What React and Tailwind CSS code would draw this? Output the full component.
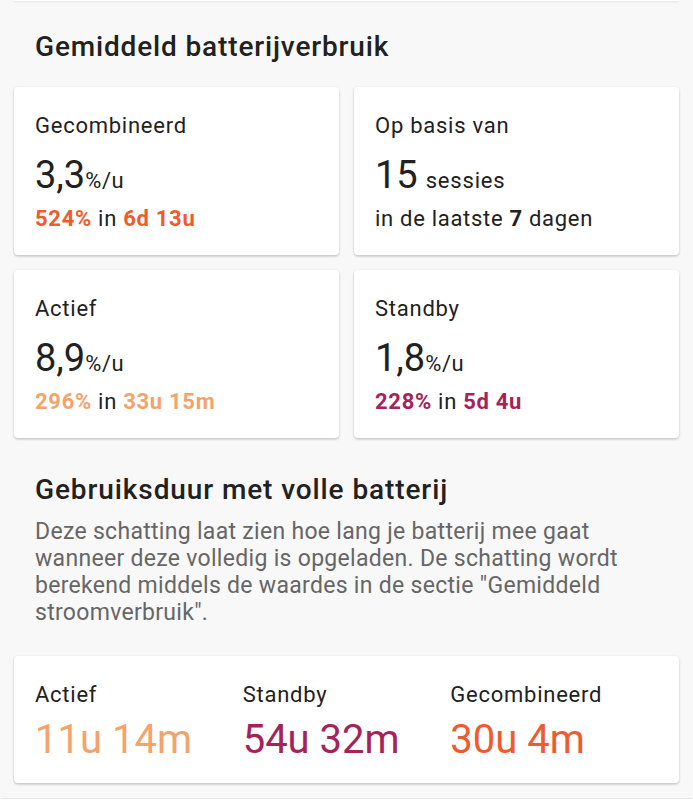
import React from 'react';

const font = { fontFamily: 'Roboto, "Noto Sans", sans-serif' };

const usageCards = [
  { label: 'Actief', rate: '8,9', pct: '296%', time: '33u 15m', color: 'text-[#f4a36b]' },
  { label: 'Standby', rate: '1,8', pct: '228%', time: '5d 4u', color: 'text-[#a5235a]' },
];

const estimates = [
  { label: 'Actief', value: '11u 14m', color: 'text-[#f4a36b]' },
  { label: 'Standby', value: '54u 32m', color: 'text-[#a5235a]' },
  { label: 'Gecombineerd', value: '30u 4m', color: 'text-[#ef5b2d]' },
];

const Card = ({ children, className = '' }) => (
  <div className={`bg-white rounded-[4px] shadow-[0_1px_3px_rgba(0,0,0,0.18),0_2px_2px_rgba(0,0,0,0.06)] ${className}`}>
    {children}
  </div>
);

const Label = ({ children }) => (
  <div className="text-[22px] leading-[28px] tracking-[0.75px] text-[#212121]">{children}</div>
);

const RateCard = ({ label, rate, pct, time, color }) => (
  <Card className="h-[168px] px-[21px] pt-[25px]">
    <Label>{label}</Label>
    <div className="mt-[13px] h-[44px] flex items-baseline text-[#212121]">
      <span className="text-[38px] leading-[44px]">{rate}</span>
      <span className="text-[22px] leading-none tracking-[0.6px]">%/u</span>
    </div>
    <div className="mt-[9px] text-[22px] leading-[26px] tracking-[0.7px] text-[#212121]">
      <span className={`font-bold ${color}`}>{pct}</span> in <span className={`font-bold ${color}`}>{time}</span>
    </div>
  </Card>
);

export default function App() {
  return (
    <div style={font} className="min-h-[800px] bg-[#f8f8f8] px-[14px] overflow-hidden">
      {/* card above, only its bottom edge visible */}
      <div className="h-px bg-white shadow-[0_1px_2px_rgba(0,0,0,0.12)]" />

      <h2 className="mt-[29px] pl-[21px] text-[28px] leading-[34px] tracking-[0.85px] font-medium text-[#212121]">
        Gemiddeld batterijverbruik
      </h2>

      <div className="mt-[23px] grid grid-cols-2 gap-[15px]">
        <RateCard label="Gecombineerd" rate="3,3" pct="524%" time="6d 13u" color="text-[#ef5b2d]" />
        <Card className="h-[168px] px-[21px] pt-[25px]">
          <Label>Op basis van</Label>
          <div className="mt-[13px] h-[44px] flex items-baseline text-[#212121]">
            <span className="text-[38px] leading-[44px]">15</span>
            <span className="ml-[8px] text-[22px] leading-none tracking-[0.8px]">sessies</span>
          </div>
          <div className="mt-[9px] text-[22px] leading-[26px] tracking-[0.7px] text-[#212121]">
            in de laatste <span className="font-bold">7</span> dagen
          </div>
        </Card>
        {usageCards.map((c) => (
          <RateCard key={c.label} {...c} />
        ))}
      </div>

      <h2 className="mt-[35px] pl-[21px] text-[28px] leading-[34px] tracking-[0.9px] font-medium text-[#212121]">
        Gebruiksduur met volle batterij
      </h2>
      <p className="mt-[11px] px-[21px] text-[23px] leading-[27px] tracking-[0.3px] text-[#666666]">
        Deze schatting laat zien hoe lang je batterij mee gaat wanneer deze volledig is opgeladen. De schatting wordt
        berekend middels de waardes in de sectie "Gemiddeld stroomverbruik".
      </p>

      <Card className="mt-[30px] h-[127px] px-[21px] pt-[25px] grid grid-cols-3">
        {estimates.map((e) => (
          <div key={e.label}>
            <Label>{e.label}</Label>
            <div className={`mt-[8px] text-[40px] leading-[46px] ${e.color}`}>{e.value}</div>
          </div>
        ))}
      </Card>

      {/* next card, only its top edge visible */}
      <div className="mt-[15px] -mx-[13px] h-[20px] bg-white border-t border-[#e6e6e6]" />
    </div>
  );
}
